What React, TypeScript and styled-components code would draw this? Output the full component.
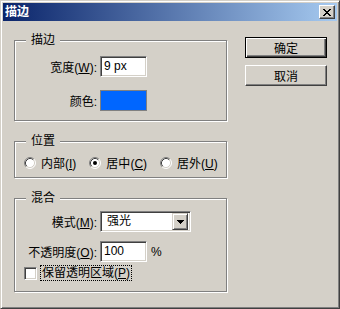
import React from "react";
import styled, { createGlobalStyle } from "styled-components";

const FACE = "#d4d0c8";
const FONT = '"Liberation Sans", "Noto Sans CJK SC", sans-serif';

const GlobalStyle = createGlobalStyle`
  html, body {
    margin: 0;
    padding: 0;
    background: ${FACE};
  }
  body {
    font-family: ${FONT};
    font-size: 12px;
    color: #000;
  }
`;

const Window = styled.div`
  box-sizing: border-box;
  width: 340px;
  height: 309px;
  background: ${FACE};
  border: 1px solid;
  border-color: ${FACE} #404040 #404040 ${FACE};
  box-shadow: inset 1px 1px 0 #fff, inset -1px -1px 0 #808080;
  padding: 2px;
  display: flex;
  flex-direction: column;
`;

const TitleBar = styled.div`
  height: 18px;
  flex: none;
  display: flex;
  align-items: center;
  justify-content: space-between;
  padding: 0 2px 0 2px;
  background: linear-gradient(to right, #0a246a, #a6caf0);
`;

const TitleText = styled.span`
  color: #fff;
  font-weight: bold;
  font-size: 12px;
  line-height: 18px;
`;

const CloseButton = styled.div`
  box-sizing: border-box;
  width: 16px;
  height: 14px;
  background: ${FACE};
  border: 1px solid;
  border-color: #fff #404040 #404040 #fff;
  box-shadow: inset -1px -1px 0 #808080;
  display: flex;
  align-items: center;
  justify-content: center;
  padding: 1px;
`;

const Body = styled.div`
  flex: 1;
  display: flex;
  align-items: flex-start;
  gap: 18px;
  padding: 16px 0 0 11px;
`;

const LeftCol = styled.div`
  width: 213px;
  margin-top: 3px;
  display: flex;
  flex-direction: column;
  gap: 20px;
`;

const Group = styled.div<{ $pt: number; $pb: number }>`
  position: relative;
  border: 1px solid #808080;
  box-shadow: inset 1px 1px 0 #fff, 1px 1px 0 #fff;
  padding: ${(p) => p.$pt}px 8px ${(p) => p.$pb}px 9px;
  display: flex;
  flex-direction: column;
`;

const Legend = styled.span`
  position: absolute;
  left: 11px;
  top: -8px;
  padding: 0 5px;
  background: ${FACE};
  line-height: 14px;
`;

const FieldRow = styled.div<{ $mt?: number }>`
  display: grid;
  grid-template-columns: 73px auto;
  column-gap: 3px;
  align-items: center;
  justify-items: start;
  margin-top: ${(p) => p.$mt ?? 0}px;
`;

const Label = styled.span`
  justify-self: end;
  white-space: nowrap;
`;

const Sunken = styled.div<{ $w: number }>`
  box-sizing: border-box;
  width: ${(p) => p.$w}px;
  height: 21px;
  background: #fff;
  border: 1px solid;
  border-color: #808080 #fff #fff #808080;
  box-shadow: inset 1px 1px 0 #404040, inset -1px -1px 0 ${FACE};
  display: flex;
  align-items: center;
  padding: 0 2px 0 3px;
  line-height: 17px;
`;

const Swatch = styled.div<{ $color: string }>`
  box-sizing: border-box;
  width: 47px;
  height: 21px;
  border: 1px solid #808080;
  background: ${(p) => p.$color};
`;

const SelectBox = styled(Sunken)`
  justify-content: space-between;
  padding: 2px 2px 2px 6px;
`;

const DropButton = styled.div`
  box-sizing: border-box;
  width: 16px;
  height: 17px;
  background: ${FACE};
  border: 1px solid;
  border-color: ${FACE} #404040 #404040 ${FACE};
  box-shadow: inset 1px 1px 0 #fff, inset -1px -1px 0 #808080;
  display: flex;
  align-items: center;
  justify-content: center;
`;

const Unit = styled.span`
  margin-left: 4px;
`;

const InlineRow = styled.div`
  display: flex;
  align-items: center;
`;

const RadioRow = styled.div`
  display: flex;
  align-items: center;
  gap: 13px;
  height: 13px;
`;

const RadioItem = styled.label`
  display: flex;
  align-items: center;
  gap: 5px;
  white-space: nowrap;
`;

const CheckRow = styled.div`
  display: flex;
  align-items: center;
  gap: 3px;
  margin-top: 3px;
  height: 16px;
`;

const CheckBox = styled.div`
  box-sizing: border-box;
  width: 13px;
  height: 13px;
  background: #fff;
  border: 1px solid;
  border-color: #808080 #fff #fff #808080;
  box-shadow: inset 1px 1px 0 #404040, inset -1px -1px 0 ${FACE};
`;

const FocusLabel = styled.span`
  border: 1px dotted #000;
  padding: 0 1px;
  line-height: 14px;
  white-space: nowrap;
`;

const ButtonCol = styled.div`
  display: flex;
  flex-direction: column;
  gap: 7px;
`;

const PushButton = styled.div<{ $default?: boolean }>`
  box-sizing: border-box;
  width: 82px;
  height: 21px;
  display: flex;
  align-items: center;
  justify-content: center;
  background: ${FACE};
  border: 1px solid;
  border-color: ${(p) => (p.$default ? "#000" : "#fff #404040 #404040 #fff")};
  box-shadow: ${(p) =>
    p.$default
      ? "inset 1px 1px 0 #fff, inset -1px -1px 0 #404040, inset -2px -2px 0 #808080"
      : "inset -1px -1px 0 #808080"};
`;

const CloseGlyph = () => {
  const rows = ["11000011", "01100110", "00111100", "00011000", "00111100", "01100110", "11000011"];
  return (
    <svg width="8" height="7" viewBox="0 0 8 7" shapeRendering="crispEdges">
      {rows.map((r, y) =>
        r.split("").map((c, x) => (c === "1" ? <rect key={`${x}-${y}`} x={x} y={y} width="1" height="1" fill="#000" /> : null))
      )}
    </svg>
  );
};

const DownArrow = () => (
  <svg width="7" height="4" viewBox="0 0 7 4" shapeRendering="crispEdges">
    <rect x="0" y="0" width="7" height="1" fill="#000" />
    <rect x="1" y="1" width="5" height="1" fill="#000" />
    <rect x="2" y="2" width="3" height="1" fill="#000" />
    <rect x="3" y="3" width="1" height="1" fill="#000" />
  </svg>
);

const RadioIcon = ({ checked }: { checked?: boolean }) => (
  <svg width="12" height="12" viewBox="0 0 12 12">
    <circle cx="6" cy="6" r="5" fill="#fff" />
    <path d="M2.11 9.89 A5.5 5.5 0 0 1 9.89 2.11" stroke="#808080" fill="none" />
    <path d="M9.89 2.11 A5.5 5.5 0 0 1 2.11 9.89" stroke="#fff" fill="none" />
    <path d="M2.82 9.18 A4.5 4.5 0 0 1 9.18 2.82" stroke="#404040" fill="none" />
    <path d="M9.18 2.82 A4.5 4.5 0 0 1 2.82 9.18" stroke={FACE} fill="none" />
    {checked && <circle cx="6" cy="6" r="2" fill="#000" />}
  </svg>
);

const positions = [
  { text: "内部", key: "I" },
  { text: "居中", key: "C", checked: true },
  { text: "居外", key: "U" },
];

export default function App() {
  return (
    <>
      <GlobalStyle />
      <Window>
        <TitleBar>
          <TitleText>描边</TitleText>
          <CloseButton>
            <CloseGlyph />
          </CloseButton>
        </TitleBar>
        <Body>
          <LeftCol>
            <Group $pt={15} $pb={9}>
              <Legend>描边</Legend>
              <FieldRow>
                <Label>
                  宽度(<u>W</u>):
                </Label>
                <Sunken $w={47}>9 px</Sunken>
              </FieldRow>
              <FieldRow $mt={13}>
                <Label>颜色:</Label>
                <Swatch $color="#0066ff" />
              </FieldRow>
            </Group>

            <Group $pt={14} $pb={8}>
              <Legend>位置</Legend>
              <RadioRow>
                {positions.map((p) => (
                  <RadioItem key={p.key}>
                    <RadioIcon checked={p.checked} />
                    <span>
                      {p.text}(<u>{p.key}</u>)
                    </span>
                  </RadioItem>
                ))}
              </RadioRow>
            </Group>

            <Group $pt={12} $pb={10}>
              <Legend>混合</Legend>
              <FieldRow>
                <Label>
                  模式(<u>M</u>):
                </Label>
                <SelectBox $w={91}>
                  <span>强光</span>
                  <DropButton>
                    <DownArrow />
                  </DropButton>
                </SelectBox>
              </FieldRow>
              <FieldRow $mt={9}>
                <Label>
                  不透明度(<u>O</u>):
                </Label>
                <InlineRow>
                  <Sunken $w={47}>100</Sunken>
                  <Unit>%</Unit>
                </InlineRow>
              </FieldRow>
              <CheckRow>
                <CheckBox />
                <FocusLabel>
                  保留透明区域(<u>P</u>)
                </FocusLabel>
              </CheckRow>
            </Group>
          </LeftCol>
          <ButtonCol>
            <PushButton $default>确定</PushButton>
            <PushButton>取消</PushButton>
          </ButtonCol>
        </Body>
      </Window>
    </>
  );
}
